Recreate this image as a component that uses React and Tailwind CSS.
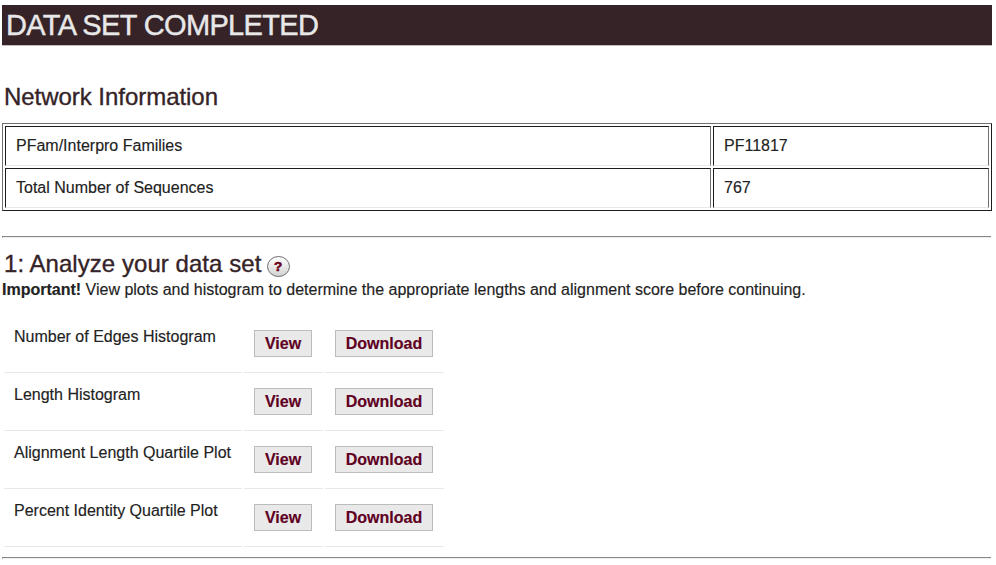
const families = [
  ['PFam/Interpro Families', 'PF11817'],
  ['Total Number of Sequences', '767'],
];

const plots = [
  'Number of Edges Histogram',
  'Length Histogram',
  'Alignment Length Quartile Plot',
  'Percent Identity Quartile Plot',
];

function Cell({ children }) {
  return (
    <div className="h-10 whitespace-nowrap border border-t-[#1c1c1c] border-r-[#6f6f6f] border-b-[#e8e8e8] border-l-[#1c1c1c] pl-2.5 pt-[7px] leading-6">
      {children}
    </div>
  );
}

function Button({ className, children }) {
  return (
    <button className={`flex h-[27px] items-center justify-center border border-[#bcbcbc] bg-[#e9e9e9] font-bold text-[#5e001f] ${className}`}>
      {children}
    </button>
  );
}

function Rule() {
  return <div className="mr-px h-0.5 border-b border-l border-t border-b-[#eeeeee] border-l-[#888888] border-t-[#888888]" />;
}

function HelpIcon() {
  return (
    <svg width="24" height="24" viewBox="0 0 24 24" className="mt-[7px]">
      <defs>
        <linearGradient id="help-fill" x1="0" y1="0" x2="0" y2="1">
          <stop offset="0" stopColor="#ffffff" />
          <stop offset="1" stopColor="#d2d2d2" />
        </linearGradient>
      </defs>
      <ellipse cx="12.5" cy="11.5" rx="11" ry="10" fill="url(#help-fill)" stroke="#6e6e6e" />
      <text x="12.2" y="16" textAnchor="middle" fontSize="13.5" fontWeight="bold" fill="#6a0018" stroke="#6a0018" strokeWidth="0.6">?</text>
    </svg>
  );
}

export default function App() {
  return (
    <main className="h-[565px] w-[996px] overflow-hidden bg-white pl-0.5 pr-1 pt-[5px] font-['Liberation_Sans',Arial,sans-serif] text-base text-[#222222] [-webkit-text-stroke:0.15px]">
      <h1 className="h-[41px] whitespace-nowrap border-b border-[#c4bcbe] bg-[#352328] pl-1 text-[29px] leading-[40px] tracking-[-0.64px] text-[#e8e8e8] [-webkit-text-stroke:0.4px]">
        DATA SET COMPLETED
      </h1>
      <h2 className="mt-[35px] h-[42px] whitespace-nowrap pl-0.5 text-2xl leading-8 tracking-[-0.04px] text-[#352328] [-webkit-text-stroke:0.35px]">Network Information</h2>
      <div className="grid grid-cols-[706px_276px] gap-0.5 border border-b-[#1c1c1c] border-l-[#6f6f6f] border-r-[#1c1c1c] border-t-[#6f6f6f] p-0.5">
        {families.flatMap(([label, value]) => [
          <Cell key={label}>{label}</Cell>,
          <Cell key={value}>{value}</Cell>,
        ])}
      </div>
      <div className="mt-[25px]">
        <Rule />
      </div>
      <div className="mt-2.5 flex h-8 gap-1">
        <h2 className="w-[260px] whitespace-nowrap pl-0.5 text-2xl leading-8 tracking-[0.05px] text-[#352328] [-webkit-text-stroke:0.35px]">1: Analyze your data set</h2>
        <HelpIcon />
      </div>
      <p className="h-[35px] whitespace-nowrap leading-5">
        <b>Important!</b> View plots and histogram to determine the appropriate lengths and alignment score before continuing.
      </p>
      <div className="ml-0.5 w-[440px]">
        {plots.map((label) => (
          <div key={label} className="grid h-[58px] grid-cols-[238px_79px_119px] gap-0.5">
            <div className="whitespace-nowrap border-b border-[#e8e8e8] pl-2.5 pt-2.5 leading-6">{label}</div>
            <div className="border-b border-[#e8e8e8] pl-2.5 pt-[15px]">
              <Button className="w-[58px]">View</Button>
            </div>
            <div className="border-b border-[#e8e8e8] pl-2.5 pt-[15px]">
              <Button className="w-[98px]">Download</Button>
            </div>
          </div>
        ))}
      </div>
      <div className="mt-2.5">
        <Rule />
      </div>
    </main>
  );
}
